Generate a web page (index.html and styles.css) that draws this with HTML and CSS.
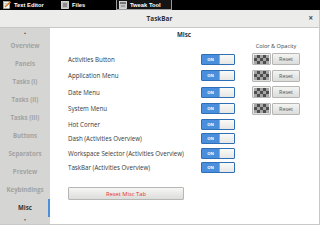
FILE: index.html
```html
<!DOCTYPE html>
<html>
<head>
<meta charset="utf-8">
<link rel="stylesheet" href="styles.css">
</head>
<body>
<div class="topbar">
  <div class="task">
    <svg class="ticon" viewBox="0 0 8 8" width="8" height="8"><rect x="0.5" y="0.5" width="6" height="7" fill="#f4f4f0" stroke="#bbb" stroke-width="0.6"/><path d="M2 6 L7.5 0.8" stroke="#e07a20" stroke-width="1.6"/><path d="M1.5 2.5h3M1.5 4h2" stroke="#999" stroke-width="0.5"/></svg>
    <span>Text Editor</span>
  </div>
  <div class="task">
    <svg class="ticon" viewBox="0 0 8 8" width="8" height="8"><rect x="0.5" y="0.5" width="7" height="7" fill="#bdbdbd" stroke="#eee" stroke-width="0.8"/><rect x="2" y="2" width="4" height="4" fill="#8c8c8c"/></svg>
    <span>Files</span>
  </div>
  <div class="task active">
    <svg class="ticon" viewBox="0 0 8 8" width="8" height="8"><rect x="0.5" y="0.5" width="7" height="7" fill="#c8c8c8" stroke="#eee" stroke-width="0.8"/><rect x="1" y="1" width="6" height="2" fill="#777"/><path d="M2 5h4" stroke="#666" stroke-width="0.8"/></svg>
    <span>Tweak Tool</span>
  </div>
</div>
<div class="window">
  <div class="titlebar">
    <span class="title">TaskBar</span>
    <span class="close">×</span>
  </div>
  <div class="content">
    <nav class="sidebar">
      <div class="arrow">▲</div>
      <div class="item">Overview</div>
      <div class="item">Panels</div>
      <div class="item">Tasks (I)</div>
      <div class="item">Tasks (II)</div>
      <div class="item">Tasks (III)</div>
      <div class="item">Buttons</div>
      <div class="item">Separators</div>
      <div class="item">Preview</div>
      <div class="item">Keybindings</div>
      <div class="item selected">Misc</div>
      <div class="arrow down">▼</div>
    </nav>
    <main class="main">
      <div class="heading">Misc</div>
      <div class="settings">
        <div class="label"></div>
        <div></div>
        <div class="colhead">Color &amp; Opacity</div>

        <div class="label big">Activities Button</div>
        <div class="cell big"><div class="switch"><span class="on">ON</span><span class="knob"></span></div></div>
        <div class="cell big colors"><span class="color"><span class="checker"></span></span><span class="reset">Reset</span></div>

        <div class="label big">Application Menu</div>
        <div class="cell big"><div class="switch"><span class="on">ON</span><span class="knob"></span></div></div>
        <div class="cell big colors"><span class="color"><span class="checker"></span></span><span class="reset">Reset</span></div>

        <div class="label big">Date Menu</div>
        <div class="cell big"><div class="switch"><span class="on">ON</span><span class="knob"></span></div></div>
        <div class="cell big colors"><span class="color"><span class="checker"></span></span><span class="reset">Reset</span></div>

        <div class="label big">System Menu</div>
        <div class="cell big"><div class="switch"><span class="on">ON</span><span class="knob"></span></div></div>
        <div class="cell big colors"><span class="color"><span class="checker"></span></span><span class="reset">Reset</span></div>

        <div class="label">Hot Corner</div>
        <div class="cell"><div class="switch"><span class="on">ON</span><span class="knob"></span></div></div>
        <div></div>

        <div class="label">Dash (Activities Overview)</div>
        <div class="cell"><div class="switch"><span class="on">ON</span><span class="knob"></span></div></div>
        <div></div>

        <div class="label">Workspace Selector (Activities Overview)</div>
        <div class="cell"><div class="switch"><span class="on">ON</span><span class="knob"></span></div></div>
        <div></div>

        <div class="label">TaskBar (Activities Overview)</div>
        <div class="cell"><div class="switch"><span class="on">ON</span><span class="knob"></span></div></div>
        <div></div>
      </div>
      <button class="resetall">Reset Misc Tab</button>
    </main>
  </div>
</div>
</body>
</html>
```
FILE: styles.css
```css
* { box-sizing: border-box; }
html, body { margin: 0; padding: 0; }
body {
  width: 320px;
  height: 225px;
  overflow: hidden;
  background: #fff;
  font-family: "Open Sans", "Liberation Sans", sans-serif;
  color: #2e3436;
}
.topbar {
  height: 10px;
  background: #000;
  display: flex;
  align-items: stretch;
}
.task {
  width: 58px;
  display: flex;
  align-items: center;
  gap: 3px;
  padding-left: 3px;
  color: #fff;
  font-family: "Liberation Sans", sans-serif;
  font-weight: bold;
  font-size: 5.8px;
  white-space: nowrap;
}
.task.active {
  width: 56px;
  padding-left: 2px;
  border: 1px solid #9a9a9a;
  border-top: none;
  background: #141414;
}
.ticon { flex: none; display: block; }
.window {
  height: 215px;
  display: flex;
  flex-direction: column;
  border-right: 1px solid #c9c9c7;
  border-bottom: 1px solid #c9c9c7;
}
.titlebar {
  height: 18px;
  flex: none;
  background: #ececeb;
  border-bottom: 1px solid #c8c8c6;
  display: flex;
  align-items: center;
  justify-content: center;
  position: relative;
}
.title {
  font-weight: bold;
  font-size: 6.4px;
  color: #2e3436;
}
.close {
  position: absolute;
  right: 6px;
  top: 4px;
  font-size: 8px;
  font-weight: bold;
  color: #444;
  line-height: 8px;
}
.content {
  flex: 1;
  display: flex;
  min-height: 0;
}
.sidebar {
  width: 50px;
  flex: none;
  background: #d5d5d3;
  display: flex;
  flex-direction: column;
}
.arrow {
  height: 8px;
  display: flex;
  align-items: center;
  justify-content: center;
  font-size: 3px;
  color: #444;
  padding-top: 2px;
}
.arrow.down {
  height: 6px;
  padding-top: 0;
}
.item {
  height: 18.1px;
  display: flex;
  align-items: center;
  justify-content: center;
  font-weight: bold;
  font-size: 6.1px;
  color: #a3a3a1;
  white-space: nowrap;
}
.item.selected {
  color: #2e3436;
  box-shadow: inset -2px 0 0 #4a90d9;
}
.main {
  flex: 1;
  padding: 2px 19px 0 18px;
  display: flex;
  flex-direction: column;
  align-items: stretch;
}
.heading {
  height: 10px;
  text-align: center;
  font-weight: bold;
  font-size: 6.2px;
  line-height: 10px;
}
.settings {
  margin-top: 1px;
  display: grid;
  grid-template-columns: 1fr 34px 65px;
  grid-template-rows: 10px repeat(4, 16.5px) repeat(4, 14.5px);
  align-items: center;
}
.colhead {
  padding-left: 17px;
  text-align: center;
  font-size: 5.6px;
  color: #3a3f41;
  white-space: nowrap;
}
.label {
  font-size: 6.2px;
  color: #333a3c;
  white-space: nowrap;
}
.cell { display: flex; align-items: center; }
.colors {
  padding-left: 17px;
  gap: 1px;
}
.switch {
  width: 34px;
  height: 11px;
  display: flex;
  border: 1px solid #2f6fb7;
  border-radius: 1px;
  overflow: hidden;
}
.switch .on {
  width: 17px;
  background: #4a8fdb;
  color: #fff;
  font-size: 4.2px;
  font-weight: bold;
  display: flex;
  align-items: center;
  justify-content: center;
}
.switch .knob {
  flex: 1;
  background: linear-gradient(#fafaf9, #e6e6e4);
  border: 1px solid #a9a9a7;
  border-right: 0;
  margin: -1px -1px -1px 0;
}
.color {
  width: 19px;
  height: 12px;
  border: 1px solid #b6b6b4;
  border-radius: 1px;
  background: linear-gradient(#f2f2f1, #dededc);
  display: flex;
  align-items: center;
  justify-content: center;
}
.checker {
  width: 15px;
  height: 9px;
  background: repeating-conic-gradient(#4e4e4e 0 25%, #a6a6a6 0 50%) 0 0 / 6px 6px;
}
.reset {
  width: 28px;
  height: 12px;
  border: 1px solid #b6b6b4;
  border-radius: 1px;
  background: linear-gradient(#f4f4f3, #dcdcda);
  font-size: 5.4px;
  color: #555;
  display: flex;
  align-items: center;
  justify-content: center;
}
.resetall {
  margin-top: 12px;
  width: 116px;
  height: 13px;
  padding: 0;
  border: 1px solid #b6b6b4;
  border-radius: 1px;
  background: linear-gradient(#f6f6f5, #dcdcda);
  color: #e8322c;
  font-family: "Open Sans", "Liberation Sans", sans-serif;
  font-size: 5.8px;
  display: flex;
  align-items: center;
  justify-content: center;
}
```
